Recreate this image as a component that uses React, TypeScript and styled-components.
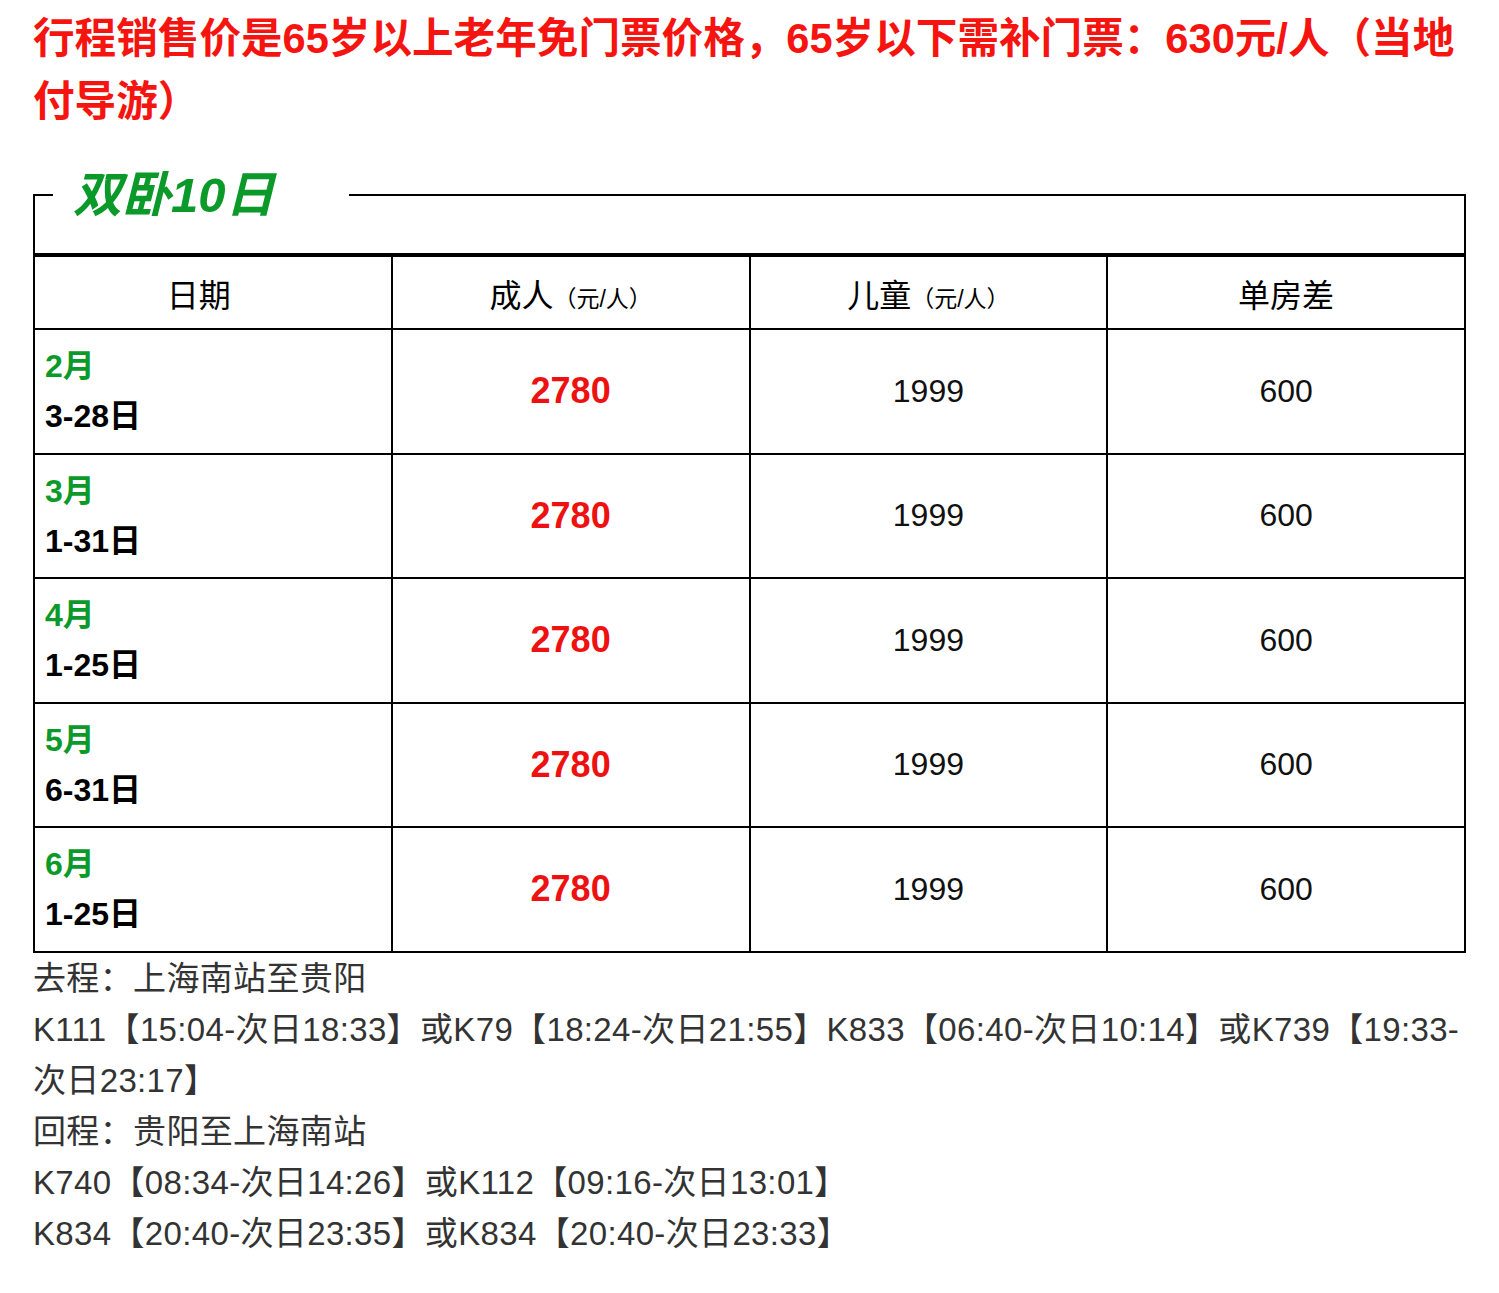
import styled, { createGlobalStyle } from 'styled-components';

const GlobalStyle = createGlobalStyle`
  body {
    margin: 0;
    background: #fff;
    font-family: "Liberation Sans", "Noto Sans CJK SC", sans-serif;
  }
`;

const Page = styled.div`
  width: 1499px;
  box-sizing: border-box;
  padding: 7px 33px 40px;
`;

const Notice = styled.p`
  margin: 0;
  font-size: 41.6px;
  line-height: 63px;
  font-weight: bold;
  color: #f5140f;
`;

const Section = styled.fieldset`
  margin: 33px 0 0;
  padding: 0 0 29px;
  border: 2px solid #000;
  min-inline-size: auto;
`;

const Title = styled.legend`
  margin-left: 18px;
  padding: 0 74px 0 20px;
  font-size: 49px;
  line-height: 58px;
  font-weight: bold;
  font-style: italic;
  color: #0b9a2a;
`;

const Table = styled.table`
  width: 100%;
  border-collapse: collapse;
  table-layout: fixed;
  color: #000;
`;

const HeadCell = styled.th<{ $shift?: number }>`
  height: 71px;
  border: 2px solid #000;
  font-size: 32px;
  font-weight: normal;
  text-align: center;
  vertical-align: middle;
  padding: 0 ${(p) => p.$shift ?? 0}px 0 0;
`;

const Unit = styled.span`
  font-size: 23px;
`;

const Cell = styled.td<{ $align?: 'left' | 'center' }>`
  height: 122.5px;
  border: 2px solid #000;
  padding: 0 0 0 ${(p) => (p.$align === 'left' ? '10px' : '0')};
  text-align: ${(p) => p.$align ?? 'center'};
  vertical-align: middle;
`;

const Month = styled.div`
  font-size: 32px;
  line-height: 50px;
  font-weight: bold;
  color: #0b9a2a;
`;

const Days = styled.div`
  font-size: 32px;
  line-height: 50px;
  font-weight: bold;
  color: #000;
`;

const Price = styled.span<{ $strong?: boolean }>`
  font-size: ${(p) => (p.$strong ? '36px' : '32px')};
  font-weight: ${(p) => (p.$strong ? 'bold' : 'normal')};
  color: ${(p) => (p.$strong ? '#ee1111' : '#111')};
`;

const Notes = styled.div`
  font-size: 33px;
  line-height: 51px;
  letter-spacing: 0.35px;
  color: #333;
`;

const rows = [
  { month: '2月', days: '3-28日' },
  { month: '3月', days: '1-31日' },
  { month: '4月', days: '1-25日' },
  { month: '5月', days: '6-31日' },
  { month: '6月', days: '1-25日' },
];

const notes = [
  '去程：上海南站至贵阳',
  'K111【15:04-次日18:33】或K79【18:24-次日21:55】K833【06:40-次日10:14】或K739【19:33-次日23:17】',
  '回程：贵阳至上海南站',
  'K740【08:34-次日14:26】或K112【09:16-次日13:01】',
  'K834【20:40-次日23:35】或K834【20:40-次日23:33】',
];

export default function App() {
  return (
    <Page>
      <GlobalStyle />
      <Notice>
        行程销售价是65岁以上老年免门票价格，65岁以下需补门票：630元/人（当地付导游）
      </Notice>
      <Section>
        <Title>双卧10日</Title>
      </Section>
      <Table>
        <thead>
          <tr>
            <HeadCell $shift={28}>日期</HeadCell>
            <HeadCell>
              成人<Unit>（元/人）</Unit>
            </HeadCell>
            <HeadCell>
              儿童<Unit>（元/人）</Unit>
            </HeadCell>
            <HeadCell>单房差</HeadCell>
          </tr>
        </thead>
        <tbody>
          {rows.map((r) => (
            <tr key={r.month}>
              <Cell $align="left">
                <Month>{r.month}</Month>
                <Days>{r.days}</Days>
              </Cell>
              <Cell>
                <Price $strong>2780</Price>
              </Cell>
              <Cell>
                <Price>1999</Price>
              </Cell>
              <Cell>
                <Price>600</Price>
              </Cell>
            </tr>
          ))}
        </tbody>
      </Table>
      <Notes>
        {notes.map((n) => (
          <div key={n}>{n}</div>
        ))}
      </Notes>
    </Page>
  );
}
